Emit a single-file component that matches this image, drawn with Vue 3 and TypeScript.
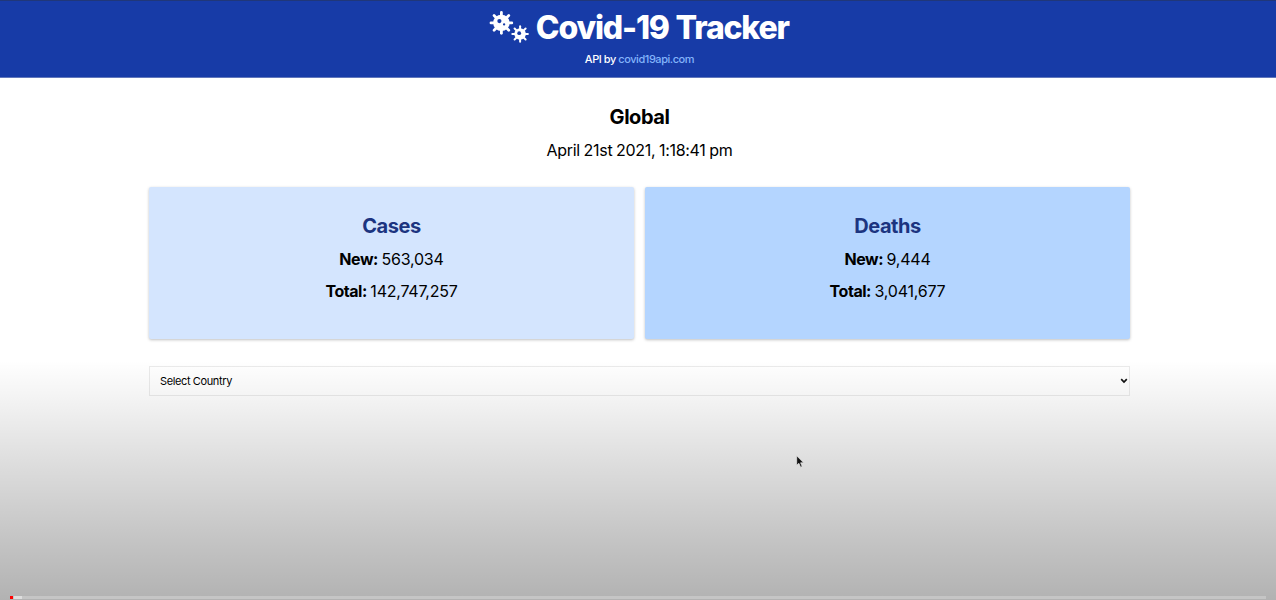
<script setup lang="ts">
interface Stat {
  title: string
  fresh: string
  total: string
  tone: string
}

const stats: Stat[] = [
  { title: 'Cases', fresh: '563,034', total: '142,747,257', tone: 'light' },
  { title: 'Deaths', fresh: '9,444', total: '3,041,677', tone: 'deep' },
]

const angles: number[] = [0, 45, 90, 135, 180, 225, 270, 315]
</script>

<template>
  <div class="page">
    <header class="header">
      <h1 class="title">
        <svg class="viruses" width="40" height="34" viewBox="0 0 40 34">
          <g fill="#fff" stroke="#fff" stroke-linecap="round">
            <g transform="translate(12.4 11.9)">
              <circle r="8.2" stroke="none" />
              <path
                v-for="a in angles"
                :key="a"
                d="M0 -7V-10.4"
                stroke-width="2.8"
                :transform="`rotate(${a})`"
              />
            </g>
            <g transform="translate(31.1 23)">
              <circle r="5.8" stroke="none" />
              <path
                v-for="a in angles"
                :key="a"
                d="M0 -5V-7.8"
                stroke-width="2"
                :transform="`rotate(${a})`"
              />
            </g>
          </g>
          <g fill="#173ba7">
            <circle cx="10.4" cy="10.1" r="2.1" />
            <circle cx="15.1" cy="13.4" r="1.15" />
            <circle cx="30.2" cy="22.2" r="1.9" />
          </g>
        </svg>
        <span class="name">Covid-19 Tracker</span>
      </h1>
      <p class="credit">API by <a class="link">covid19api.com</a></p>
    </header>

    <main class="main">
      <h2 class="heading">Global</h2>
      <p class="date">April 21st 2021, 1:18:41 pm</p>
      <section class="cards">
        <article v-for="s in stats" :key="s.title" class="card" :class="s.tone">
          <h3 class="card-title">{{ s.title }}</h3>
          <p class="figure"><b>New:</b> {{ s.fresh }}</p>
          <p class="figure"><b>Total:</b> {{ s.total }}</p>
        </article>
      </section>
      <div class="select">
        <span class="select-text">Select Country</span>
        <svg width="8" height="6" viewBox="0 0 8 6">
          <path d="M1.2 1.2L4 4L6.8 1.2" fill="none" stroke="#111" stroke-width="1.7" />
        </svg>
      </div>
    </main>

    <div class="shade"></div>
    <svg class="cursor" width="9" height="14" viewBox="0 0 9 14">
      <path
        d="M.7 .8V10.3L2.9 8.3L4.6 12.2L6.2 11.5L4.6 7.8H7.6Z"
        fill="#111"
        stroke="#e8e8e8"
        stroke-width=".7"
      />
    </svg>
    <div class="progress">
      <i class="played"></i>
      <i class="buffered"></i>
    </div>
  </div>
</template>

<style>
body {
  margin: 0;
  overflow: hidden;
}
</style>

<style scoped>
.page {
  position: relative;
  height: 600px;
  overflow: hidden;
  background: #fff;
  color: #000;
  font-family: Inter, "Liberation Sans", sans-serif;
  text-align: center;
}
h1, h2, h3, p {
  margin: 0;
}
.header {
  box-sizing: border-box;
  height: 78px;
  padding-top: 9px;
  background: #173ba7;
  border-top: 1px solid #203779;
  border-bottom: 1px solid #6177bb;
  color: #fff;
}
.title {
  display: flex;
  justify-content: center;
  align-items: center;
  gap: 6.5px;
  height: 36px;
  padding-left: 2px;
  font-size: 32px;
  line-height: 36px;
  font-weight: 800;
}
.viruses {
  flex: none;
}
.name {
  letter-spacing: -1.2px;
  word-spacing: 1px;
}
.credit {
  padding-left: 3px;
  margin-top: 6px;
  font-size: 11px;
  line-height: 14px;
  font-weight: 500;
  letter-spacing: -0.45px;
}
.link {
  color: #83b4fb;
}
.main {
  width: 981px;
  margin-left: 149px;
}
.heading {
  padding-top: 25.5px;
  font-size: 20px;
  line-height: 26px;
  letter-spacing: -0.45px;
}
.date {
  margin-top: 8px;
  font-size: 16px;
  line-height: 24px;
  letter-spacing: -0.3px;
  word-spacing: -0.5px;
}
.cards {
  display: grid;
  grid-template-columns: 1fr 1fr;
  gap: 11px;
  margin-top: 25.5px;
}
.card {
  box-sizing: border-box;
  height: 152px;
  padding-top: 26px;
  border-radius: 2px;
  box-shadow: 0 1px 3px rgba(0, 0, 0, 0.25);
}
.light {
  background: #d4e5fe;
}
.deep {
  background: #b4d5ff;
}
.card-title {
  color: #1c3480;
  font-size: 20px;
  line-height: 26px;
  letter-spacing: -0.45px;
}
.figure {
  margin-top: 8px;
  font-size: 16px;
  line-height: 24px;
  letter-spacing: -0.22px;
  word-spacing: -0.8px;
}
.figure b {
  letter-spacing: -0.45px;
}
.select {
  box-sizing: border-box;
  display: flex;
  justify-content: space-between;
  align-items: center;
  height: 30px;
  margin-top: 27px;
  padding: 0 1px 0 10px;
  border: 1px solid #ebebeb;
  background: #fff;
  font-size: 11px;
  letter-spacing: -0.38px;
}
.shade {
  position: absolute;
  inset: 360px 0 0;
  background: linear-gradient(
    rgba(0, 0, 0, 0) 0,
    rgba(0, 0, 0, 0.045) 15%,
    rgba(0, 0, 0, 0.13) 42%,
    rgba(0, 0, 0, 0.23) 75%,
    rgba(0, 0, 0, 0.3) 100%
  );
}
.cursor {
  position: absolute;
  left: 796px;
  top: 455px;
}
.progress {
  position: absolute;
  left: 10px;
  right: 10px;
  bottom: 1px;
  display: flex;
  height: 3px;
  background: #c5c5c5;
}
.played {
  width: 3px;
  background: #f00;
}
.buffered {
  width: 8px;
  margin-left: 1px;
  background: #dedede;
}
</style>
